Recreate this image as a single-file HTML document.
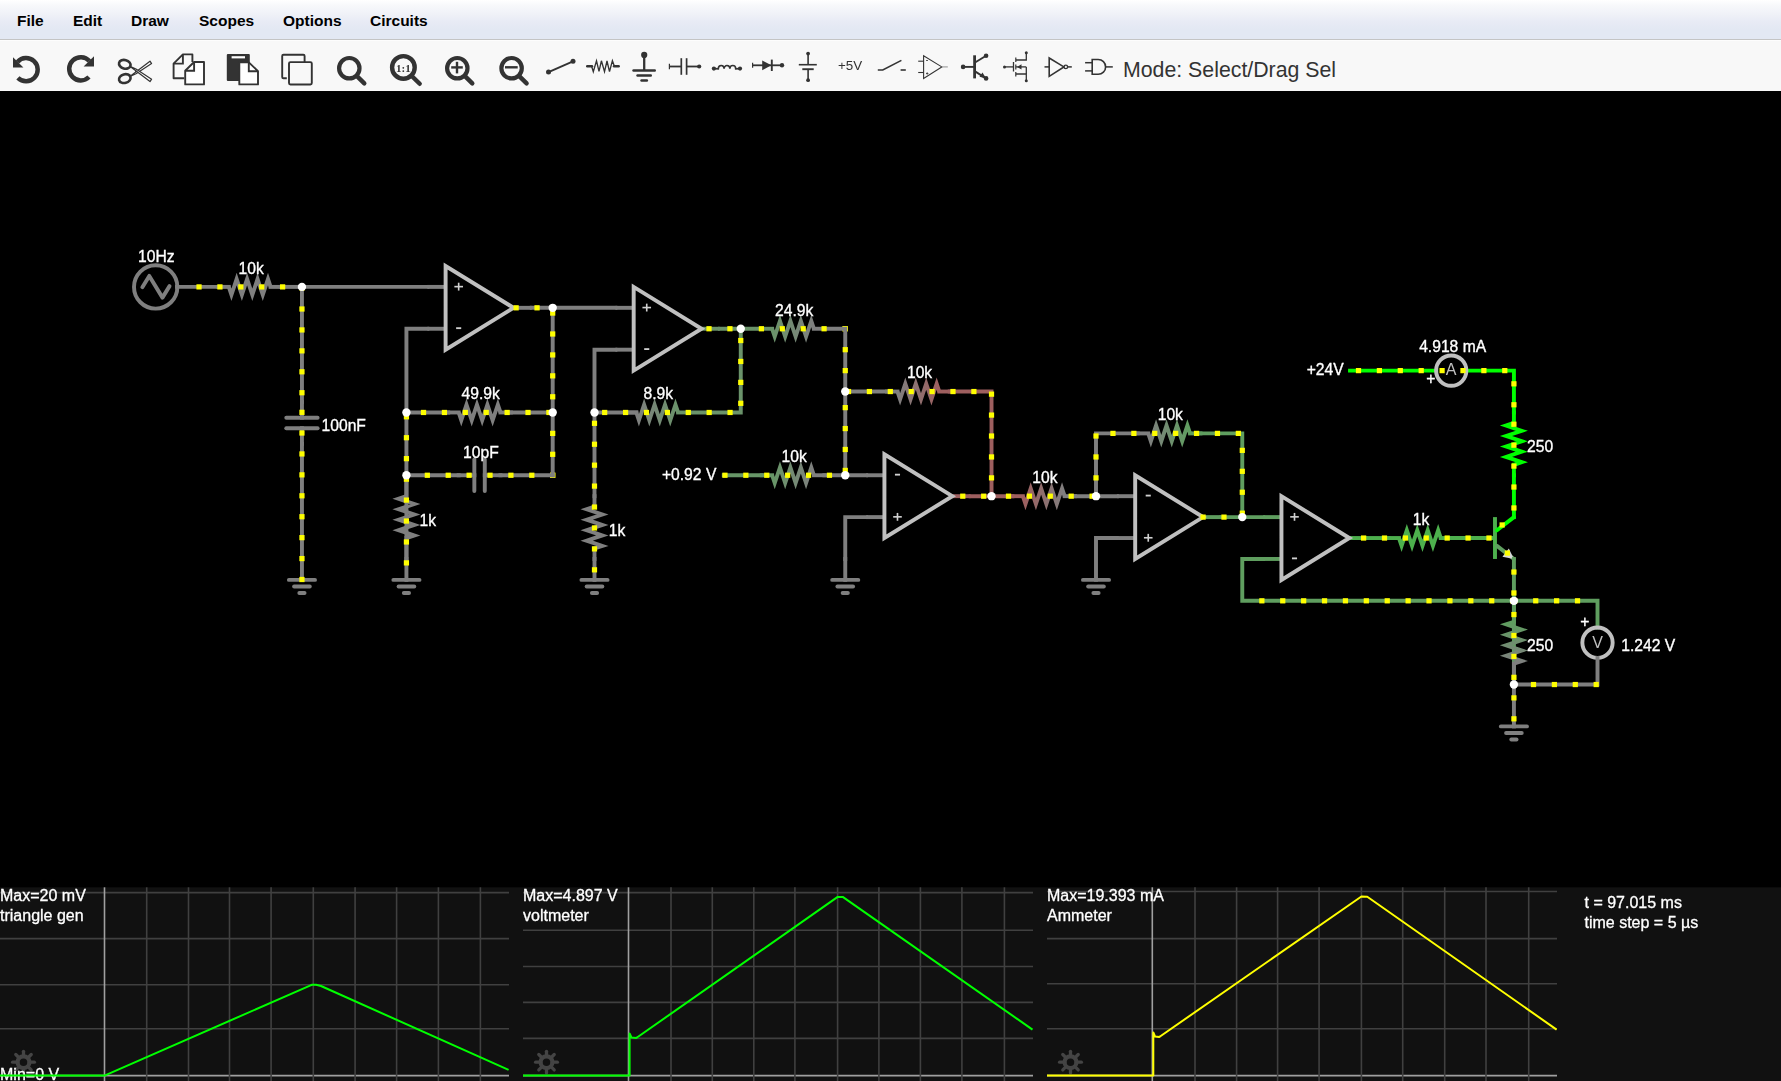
<!DOCTYPE html>
<html><head><meta charset="utf-8">
<style>
html,body{margin:0;padding:0;width:1781px;height:1081px;overflow:hidden;background:#000;font-family:"Liberation Sans",sans-serif;}
#menubar{position:absolute;left:0;top:0;width:1781px;height:39px;background:linear-gradient(#ffffff 0%,#f7f8fb 15%,#f0f2f8 35%,#e8ebf5 55%,#e3e8f3 75%,#e3e8f3 100%);border-bottom:1px solid #c4c4c4;}
#menubar span{position:absolute;top:11.7px;font-weight:bold;font-size:15.5px;color:#000;line-height:18px;}
#toolbar{position:absolute;left:0;top:40px;width:1781px;height:51.2px;background:#f8f8f8;border-top:1px solid #fdfdfd;box-sizing:border-box;}
#mode{position:absolute;left:1123px;top:57.5px;font-size:21.3px;line-height:24px;color:#333;}
svg{position:absolute;left:0;top:0;will-change:transform;}
</style></head><body>
<div id="menubar">
<span style="left:17px">File</span>
<span style="left:73px">Edit</span>
<span style="left:131px">Draw</span>
<span style="left:199px">Scopes</span>
<span style="left:283px">Options</span>
<span style="left:370px">Circuits</span>
</div>
<div id="toolbar"></div>
<div id="mode">Mode: Select/Drag Sel</div>
<svg width="1781" height="1081" viewBox="0 0 1781 1081" font-family="Liberation Sans, sans-serif">
<g fill="none" stroke="#333" stroke-linecap="butt">
<!-- undo -->
<path d="M 17.5,61.9 A 11.6 11.6 0 1 1 17.9,77.9" stroke-width="4.5"/>
<polygon points="13,57.2 13,67.6 23.4,67.6" fill="#333" stroke="none"/>
<!-- redo -->
<path d="M 89.4,61 A 11.6 11.6 0 1 0 89,77" stroke-width="4.5"/>
<polygon points="94,56.2 94,66.6 83.6,66.6" fill="#333" stroke="none"/>
<!-- scissors -->
<ellipse cx="124.8" cy="64.3" rx="5.9" ry="4.3" transform="rotate(15 124.8 64.3)" stroke-width="2.6"/>
<ellipse cx="124.8" cy="78.6" rx="5.9" ry="4.3" transform="rotate(-15 124.8 78.6)" stroke-width="2.6"/>
<path d="M129.5,76.8 L150,61.2 L151.6,63.6 L136,73.8 Z" fill="#fff" stroke-width="1.2" stroke-linejoin="round"/>
<path d="M129.5,66 L150,81.6 L151.6,79.2 L136,69 Z" fill="#fff" stroke-width="1.2" stroke-linejoin="round"/>
<circle cx="135.8" cy="71.2" r="0.8" fill="#333" stroke="none"/>
<!-- copy -->
<path d="M184.2,78.2 H173.6 V63.6 L182.9,54.4 H192.4 V62" stroke-width="1.9" stroke-linejoin="round"/>
<path d="M173.6,63.6 H182.9 V54.4" stroke-width="1.9"/>
<path d="M185.2,70.7 L194.1,62 H204 V84.4 H185.2 Z" fill="#fff" stroke-width="1.9" stroke-linejoin="round"/>
<path d="M185.2,70.7 H194.1 V62" stroke-width="1.9"/>
<!-- paste -->
<rect x="226.8" y="53.9" width="23" height="27" rx="1" fill="#333" stroke="none"/>
<rect x="231.6" y="56.2" width="13.4" height="2.2" fill="#fff" stroke="none"/>
<path d="M239.3,62.4 H248.8 L258,71.2 V84.4 H239.3 Z" fill="#fff" stroke-width="1.9" stroke-linejoin="round"/>
<path d="M248.8,62.4 V71.2 H258" stroke-width="1.9"/>
<!-- duplicate -->
<path d="M286.8,78.2 H283.5 Q282.2,78.2 282.2,76.9 V56.1 Q282.2,54.8 283.5,54.8 H303.3 Q304.6,54.8 304.6,56.1 V62" stroke-width="1.9"/>
<rect x="289" y="62.1" width="22.8" height="22.4" rx="1.4" stroke-width="1.9"/>
<!-- zoom -->
<circle cx="349.3" cy="68.2" r="10.2" stroke-width="4.2"/>
<line x1="357.2" y1="76.4" x2="364.3" y2="83.4" stroke-width="4.4" stroke-linecap="round"/>
<!-- zoom 1:1 -->
<circle cx="403.4" cy="67.4" r="11.3" stroke-width="4.4"/>
<line x1="412" y1="76.2" x2="419.7" y2="83.8" stroke-width="4.4" stroke-linecap="round"/>
<text x="403.4" y="71.8" font-family="Liberation Serif, serif" font-weight="bold" font-size="11" fill="#333" stroke="none" text-anchor="middle">1:1</text>
<!-- zoom in -->
<circle cx="457.3" cy="68.2" r="10.2" stroke-width="4.2"/>
<line x1="465.2" y1="76.4" x2="472.3" y2="83.4" stroke-width="4.4" stroke-linecap="round"/>
<line x1="451.2" y1="67.4" x2="462.8" y2="67.4" stroke-width="2.4"/>
<line x1="457" y1="61.8" x2="457" y2="73.4" stroke-width="2.4"/>
<!-- zoom out -->
<circle cx="511.6" cy="68.2" r="10.2" stroke-width="4.2"/>
<line x1="519.5" y1="76.4" x2="526.6" y2="83.4" stroke-width="4.4" stroke-linecap="round"/>
<line x1="505" y1="67.3" x2="517.7" y2="67.3" stroke-width="2.4"/>
<!-- wire -->
<line x1="548.5" y1="72.1" x2="573" y2="61.3" stroke-width="1.9"/>
<circle cx="548.5" cy="72.1" r="2.5" fill="#333" stroke="none"/>
<circle cx="573" cy="61.3" r="2.5" fill="#333" stroke="none"/>
<!-- resistor -->
<polyline points="591.6,66.2 593.3,71.6 596.5,60.8 599,71.4 601.4,60.8 604.5,71.6 607,61 609.5,71.6 612.4,60.8 614.4,66.2" stroke-width="1.35" stroke-linejoin="miter"/>
<line x1="587.2" y1="66.2" x2="592" y2="66.2" stroke-width="2.4" stroke-linecap="round"/>
<line x1="614" y1="66.2" x2="618.7" y2="66.2" stroke-width="2.4" stroke-linecap="round"/>
<!-- ground -->
<line x1="644.2" y1="55" x2="644.2" y2="70" stroke-width="2.3"/>
<circle cx="644.2" cy="54.9" r="3.1" fill="#333" stroke="none"/>
<line x1="633.6" y1="70.5" x2="654.7" y2="70.5" stroke-width="2.6" stroke-linecap="round"/>
<line x1="637.5" y1="75.5" x2="650.8" y2="75.5" stroke-width="2.4" stroke-linecap="round"/>
<line x1="641.5" y1="80.5" x2="646.9" y2="80.5" stroke-width="2.4" stroke-linecap="round"/>
<!-- capacitor -->
<line x1="669.3" y1="66.5" x2="681" y2="66.5" stroke-width="1.8"/>
<line x1="669.4" y1="63.8" x2="669.4" y2="69.2" stroke-width="1.2"/>
<line x1="681.3" y1="58.2" x2="681.3" y2="74.8" stroke-width="1.7"/>
<line x1="686.6" y1="58.2" x2="686.6" y2="74.8" stroke-width="1.7"/>
<line x1="686.6" y1="66.5" x2="699.2" y2="66.5" stroke-width="1.8"/>
<circle cx="699.2" cy="66.5" r="2.1" fill="#333" stroke="none"/>
<!-- inductor -->
<path d="M713.9,68.6 L718.3,68.8 A2.9,3.3 0 0 1 724.1,68.8 A2.9,3.3 0 0 1 729.9,68.8 A2.9,3.3 0 0 1 735.7,68.8 L740,68.6" stroke-width="1.6"/>
<circle cx="713.9" cy="68.6" r="2.1" fill="#333" stroke="none"/>
<circle cx="740" cy="68.6" r="2.1" fill="#333" stroke="none"/>
<!-- diode -->
<line x1="752.6" y1="65.3" x2="782" y2="65.3" stroke-width="1.8"/>
<line x1="752.6" y1="62.8" x2="752.6" y2="67.8" stroke-width="1.2"/>
<polygon points="762.2,60.4 762.2,70.2 771.4,65.3" fill="#333" stroke="none"/>
<line x1="771.8" y1="59.6" x2="771.8" y2="71" stroke-width="1.9"/>
<circle cx="782" cy="65.3" r="2.2" fill="#333" stroke="none"/>
<!-- battery -->
<line x1="808.1" y1="53.6" x2="808.1" y2="64.7" stroke-width="1.6"/>
<line x1="798.8" y1="64.7" x2="816.8" y2="64.7" stroke-width="1.6"/>
<line x1="802.3" y1="69.2" x2="813.7" y2="69.2" stroke-width="1.9"/>
<line x1="808.1" y1="69.2" x2="808.1" y2="80.2" stroke-width="1.6"/>
<circle cx="808.1" cy="53.6" r="1.9" fill="#333" stroke="none"/>
<circle cx="808.1" cy="80.2" r="1.9" fill="#333" stroke="none"/>
<!-- +5V -->
<text x="838" y="70" font-size="13.4" fill="#333" stroke="none">+5V</text>
<!-- switch -->
<polyline points="877.8,70 882.8,70 901.4,60.4" stroke-width="1.6"/>
<line x1="900.6" y1="70" x2="905.8" y2="70" stroke-width="1.6"/>
<!-- opamp -->
<polygon points="923.6,55.7 923.6,78.4 941.8,66.9" stroke-width="1.1"/>
<line x1="918.2" y1="61.2" x2="923.6" y2="61.2" stroke-width="1.1"/>
<line x1="918.2" y1="72.5" x2="923.6" y2="72.5" stroke-width="1.1"/>
<line x1="941.8" y1="66.9" x2="947.8" y2="66.9" stroke="#999" stroke-width="1.1"/>
<line x1="926" y1="60.5" x2="928" y2="60.5" stroke-width="0.8"/>
<line x1="926" y1="73.5" x2="928.4" y2="73.5" stroke-width="0.8"/>
<line x1="927.2" y1="72.3" x2="927.2" y2="74.7" stroke-width="0.8"/>
<!-- transistor -->
<line x1="974.6" y1="55.3" x2="974.6" y2="78.4" stroke-width="2.8"/>
<line x1="963.1" y1="66.9" x2="974.6" y2="66.9" stroke-width="1.9"/>
<circle cx="963.1" cy="66.9" r="2.3" fill="#333" stroke="none"/>
<line x1="974.6" y1="62.7" x2="986.1" y2="55.7" stroke-width="1.9"/>
<circle cx="986.1" cy="55.7" r="2.3" fill="#333" stroke="none"/>
<line x1="974.6" y1="71.1" x2="986.1" y2="78.4" stroke-width="1.9"/>
<circle cx="986.1" cy="78.4" r="2.3" fill="#333" stroke="none"/>
<polygon points="986.1,78.4 979.5,76.7 982.5,72.4" fill="#333" stroke="none"/>
<!-- mosfet -->
<line x1="1004" y1="66.9" x2="1013.3" y2="66.9" stroke-width="1.3"/>
<circle cx="1004.5" cy="66.9" r="1.5" fill="#333" stroke="none"/>
<line x1="1013.5" y1="62" x2="1013.5" y2="71.5" stroke-width="1.3"/>
<line x1="1015.8" y1="57.5" x2="1015.8" y2="62" stroke-width="1.2"/>
<line x1="1015.8" y1="64.5" x2="1015.8" y2="69.5" stroke-width="1.2"/>
<line x1="1015.8" y1="72" x2="1015.8" y2="76.5" stroke-width="1.2"/>
<polyline points="1016,60 1026.3,60 1026.3,52.8" stroke-width="1.3"/>
<polyline points="1016,74 1026.3,74 1026.3,80.8" stroke-width="1.3"/>
<line x1="1016" y1="66.9" x2="1026.3" y2="66.9" stroke-width="1.3"/>
<line x1="1026.3" y1="66.9" x2="1026.3" y2="74" stroke-width="1.3"/>
<polygon points="1017,66.9 1021.5,64.3 1021.5,69.5" fill="#333" stroke="none"/>
<circle cx="1026.3" cy="52.8" r="1.5" fill="#333" stroke="none"/>
<circle cx="1026.3" cy="80.8" r="1.5" fill="#333" stroke="none"/>
<!-- inverter -->
<polygon points="1049.2,58 1049.2,76.3 1063.9,66.9" stroke-width="1.6"/>
<line x1="1044.5" y1="66.9" x2="1049.2" y2="66.9" stroke-width="1.5"/>
<circle cx="1065.8" cy="66.9" r="1.8" stroke-width="1.3"/>
<line x1="1067.6" y1="66.9" x2="1071.8" y2="66.9" stroke-width="1.5"/>
<!-- AND -->
<line x1="1085.1" y1="62.7" x2="1092.2" y2="62.7" stroke-width="1.5"/>
<line x1="1085.1" y1="70.9" x2="1092.2" y2="70.9" stroke-width="1.5"/>
<path d="M1092.2,59.5 H1098.2 A 7.4 7.4 0 0 1 1098.2,74.3 H1092.2 Z" stroke-width="1.6"/>
<line x1="1105.6" y1="66.9" x2="1112.8" y2="66.9" stroke-width="1.5"/>
</g>

<rect x="0" y="887.3" width="1781" height="194" fill="#111111"/>
<line x1="0" y1="892.6" x2="509" y2="892.6" stroke="#404040" stroke-width="1.6"/>
<line x1="0" y1="938.6" x2="509" y2="938.6" stroke="#404040" stroke-width="1.6"/>
<line x1="0" y1="984.7" x2="509" y2="984.7" stroke="#404040" stroke-width="1.6"/>
<line x1="0" y1="1028.8" x2="509" y2="1028.8" stroke="#404040" stroke-width="1.6"/>
<line x1="0" y1="1075.6" x2="509" y2="1075.6" stroke="#a0a0a0" stroke-width="1.6"/>
<line x1="104.5" y1="887.3" x2="104.5" y2="1081" stroke="#a0a0a0" stroke-width="1.6"/>
<line x1="146.7" y1="887.3" x2="146.7" y2="1081" stroke="#404040" stroke-width="1.6"/>
<line x1="188.5" y1="887.3" x2="188.5" y2="1081" stroke="#404040" stroke-width="1.6"/>
<line x1="229.5" y1="887.3" x2="229.5" y2="1081" stroke="#404040" stroke-width="1.6"/>
<line x1="271.1" y1="887.3" x2="271.1" y2="1081" stroke="#404040" stroke-width="1.6"/>
<line x1="313.3" y1="887.3" x2="313.3" y2="1081" stroke="#404040" stroke-width="1.6"/>
<line x1="355.1" y1="887.3" x2="355.1" y2="1081" stroke="#404040" stroke-width="1.6"/>
<line x1="396.6" y1="887.3" x2="396.6" y2="1081" stroke="#404040" stroke-width="1.6"/>
<line x1="438.4" y1="887.3" x2="438.4" y2="1081" stroke="#404040" stroke-width="1.6"/>
<line x1="480.4" y1="887.3" x2="480.4" y2="1081" stroke="#404040" stroke-width="1.6"/>
<circle cx="23.5" cy="1062.2" r="5.9" fill="none" stroke="#444" stroke-width="4.2"/><line x1="29.50" y1="1062.20" x2="34.40" y2="1062.20" stroke="#444" stroke-width="3.3" stroke-linecap="round"/><line x1="27.74" y1="1066.44" x2="31.21" y2="1069.91" stroke="#444" stroke-width="3.3" stroke-linecap="round"/><line x1="23.50" y1="1068.20" x2="23.50" y2="1073.10" stroke="#444" stroke-width="3.3" stroke-linecap="round"/><line x1="19.26" y1="1066.44" x2="15.79" y2="1069.91" stroke="#444" stroke-width="3.3" stroke-linecap="round"/><line x1="17.50" y1="1062.20" x2="12.60" y2="1062.20" stroke="#444" stroke-width="3.3" stroke-linecap="round"/><line x1="19.26" y1="1057.96" x2="15.79" y2="1054.49" stroke="#444" stroke-width="3.3" stroke-linecap="round"/><line x1="23.50" y1="1056.20" x2="23.50" y2="1051.30" stroke="#444" stroke-width="3.3" stroke-linecap="round"/><line x1="27.74" y1="1057.96" x2="31.21" y2="1054.49" stroke="#444" stroke-width="3.3" stroke-linecap="round"/>
<text x="0" y="900.8" font-size="16" fill="#fff" stroke="#fff" stroke-width="0.3">Max=20 mV</text>
<text x="0" y="920.8" font-size="16" fill="#fff" stroke="#fff" stroke-width="0.3">triangle gen</text>
<text x="0" y="1080" font-size="16" fill="#fff" stroke="#fff" stroke-width="0.3">Min=0 V</text>
<polyline points="0,1075.6 104.5,1075.6 310,985.6 312,984.8 316,984.8 321,986 508.6,1069.9" fill="none" stroke="#00ff00" stroke-width="2" stroke-linejoin="round"/>
<line x1="523" y1="892.6" x2="1033" y2="892.6" stroke="#404040" stroke-width="1.6"/>
<line x1="523" y1="930.2" x2="1033" y2="930.2" stroke="#404040" stroke-width="1.6"/>
<line x1="523" y1="966.5" x2="1033" y2="966.5" stroke="#404040" stroke-width="1.6"/>
<line x1="523" y1="1002.4" x2="1033" y2="1002.4" stroke="#404040" stroke-width="1.6"/>
<line x1="523" y1="1038.4" x2="1033" y2="1038.4" stroke="#404040" stroke-width="1.6"/>
<line x1="523" y1="1075.6" x2="1033" y2="1075.6" stroke="#a0a0a0" stroke-width="1.6"/>
<line x1="628.5" y1="887.3" x2="628.5" y2="1081" stroke="#a0a0a0" stroke-width="1.6"/>
<line x1="671.0" y1="887.3" x2="671.0" y2="1081" stroke="#404040" stroke-width="1.6"/>
<line x1="712.3" y1="887.3" x2="712.3" y2="1081" stroke="#404040" stroke-width="1.6"/>
<line x1="753.8" y1="887.3" x2="753.8" y2="1081" stroke="#404040" stroke-width="1.6"/>
<line x1="794.9" y1="887.3" x2="794.9" y2="1081" stroke="#404040" stroke-width="1.6"/>
<line x1="837.6" y1="887.3" x2="837.6" y2="1081" stroke="#404040" stroke-width="1.6"/>
<line x1="878.9" y1="887.3" x2="878.9" y2="1081" stroke="#404040" stroke-width="1.6"/>
<line x1="920.4" y1="887.3" x2="920.4" y2="1081" stroke="#404040" stroke-width="1.6"/>
<line x1="961.9" y1="887.3" x2="961.9" y2="1081" stroke="#404040" stroke-width="1.6"/>
<line x1="1004.4" y1="887.3" x2="1004.4" y2="1081" stroke="#404040" stroke-width="1.6"/>
<circle cx="546.5" cy="1062.2" r="5.9" fill="none" stroke="#444" stroke-width="4.2"/><line x1="552.50" y1="1062.20" x2="557.40" y2="1062.20" stroke="#444" stroke-width="3.3" stroke-linecap="round"/><line x1="550.74" y1="1066.44" x2="554.21" y2="1069.91" stroke="#444" stroke-width="3.3" stroke-linecap="round"/><line x1="546.50" y1="1068.20" x2="546.50" y2="1073.10" stroke="#444" stroke-width="3.3" stroke-linecap="round"/><line x1="542.26" y1="1066.44" x2="538.79" y2="1069.91" stroke="#444" stroke-width="3.3" stroke-linecap="round"/><line x1="540.50" y1="1062.20" x2="535.60" y2="1062.20" stroke="#444" stroke-width="3.3" stroke-linecap="round"/><line x1="542.26" y1="1057.96" x2="538.79" y2="1054.49" stroke="#444" stroke-width="3.3" stroke-linecap="round"/><line x1="546.50" y1="1056.20" x2="546.50" y2="1051.30" stroke="#444" stroke-width="3.3" stroke-linecap="round"/><line x1="550.74" y1="1057.96" x2="554.21" y2="1054.49" stroke="#444" stroke-width="3.3" stroke-linecap="round"/>
<text x="523" y="900.8" font-size="16" fill="#fff" stroke="#fff" stroke-width="0.3">Max=4.897 V</text>
<text x="523" y="920.8" font-size="16" fill="#fff" stroke="#fff" stroke-width="0.3">voltmeter</text>
<polyline points="523,1075.6 629.6,1075.6 629.6,1033.5 631.5,1037.5 636,1038 637,1037.5 837.7,896.9 842.7,896.9 1032.5,1029.6" fill="none" stroke="#00ff00" stroke-width="2" stroke-linejoin="round"/>
<line x1="1047" y1="891.5" x2="1557" y2="891.5" stroke="#404040" stroke-width="1.6"/>
<line x1="1047" y1="938.6" x2="1557" y2="938.6" stroke="#404040" stroke-width="1.6"/>
<line x1="1047" y1="983.8" x2="1557" y2="983.8" stroke="#404040" stroke-width="1.6"/>
<line x1="1047" y1="1028.8" x2="1557" y2="1028.8" stroke="#404040" stroke-width="1.6"/>
<line x1="1047" y1="1075.6" x2="1557" y2="1075.6" stroke="#a0a0a0" stroke-width="1.6"/>
<line x1="1152.3" y1="887.3" x2="1152.3" y2="1081" stroke="#a0a0a0" stroke-width="1.6"/>
<line x1="1195.0" y1="887.3" x2="1195.0" y2="1081" stroke="#404040" stroke-width="1.6"/>
<line x1="1236.6" y1="887.3" x2="1236.6" y2="1081" stroke="#404040" stroke-width="1.6"/>
<line x1="1277.6" y1="887.3" x2="1277.6" y2="1081" stroke="#404040" stroke-width="1.6"/>
<line x1="1319.1" y1="887.3" x2="1319.1" y2="1081" stroke="#404040" stroke-width="1.6"/>
<line x1="1361.4" y1="887.3" x2="1361.4" y2="1081" stroke="#404040" stroke-width="1.6"/>
<line x1="1402.7" y1="887.3" x2="1402.7" y2="1081" stroke="#404040" stroke-width="1.6"/>
<line x1="1444.7" y1="887.3" x2="1444.7" y2="1081" stroke="#404040" stroke-width="1.6"/>
<line x1="1486.0" y1="887.3" x2="1486.0" y2="1081" stroke="#404040" stroke-width="1.6"/>
<line x1="1528.7" y1="887.3" x2="1528.7" y2="1081" stroke="#404040" stroke-width="1.6"/>
<circle cx="1070.5" cy="1062.2" r="5.9" fill="none" stroke="#444" stroke-width="4.2"/><line x1="1076.50" y1="1062.20" x2="1081.40" y2="1062.20" stroke="#444" stroke-width="3.3" stroke-linecap="round"/><line x1="1074.74" y1="1066.44" x2="1078.21" y2="1069.91" stroke="#444" stroke-width="3.3" stroke-linecap="round"/><line x1="1070.50" y1="1068.20" x2="1070.50" y2="1073.10" stroke="#444" stroke-width="3.3" stroke-linecap="round"/><line x1="1066.26" y1="1066.44" x2="1062.79" y2="1069.91" stroke="#444" stroke-width="3.3" stroke-linecap="round"/><line x1="1064.50" y1="1062.20" x2="1059.60" y2="1062.20" stroke="#444" stroke-width="3.3" stroke-linecap="round"/><line x1="1066.26" y1="1057.96" x2="1062.79" y2="1054.49" stroke="#444" stroke-width="3.3" stroke-linecap="round"/><line x1="1070.50" y1="1056.20" x2="1070.50" y2="1051.30" stroke="#444" stroke-width="3.3" stroke-linecap="round"/><line x1="1074.74" y1="1057.96" x2="1078.21" y2="1054.49" stroke="#444" stroke-width="3.3" stroke-linecap="round"/>
<text x="1047" y="900.8" font-size="16" fill="#fff" stroke="#fff" stroke-width="0.3">Max=19.393 mA</text>
<text x="1047" y="920.8" font-size="16" fill="#fff" stroke="#fff" stroke-width="0.3">Ammeter</text>
<polyline points="1047,1075.6 1153.3,1075.6 1153.3,1032.4 1155,1036.5 1159,1037 1160,1036.5 1361.4,896.5 1367.3,896.8 1556.6,1029.6" fill="none" stroke="#ffff00" stroke-width="2" stroke-linejoin="round"/>
<text x="1584.5" y="907.8" font-size="16" fill="#fff" stroke="#fff" stroke-width="0.3">t = 97.015 ms</text>
<text x="1584.5" y="927.8" font-size="16" fill="#fff" stroke="#fff" stroke-width="0.3">time step = 5 µs</text>
<g transform="translate(301.95,286.9) scale(1.306,1.308)">
<rect x="190.00" y="142.00" width="4" height="4" fill="#ffff00"/>
<rect x="190.00" y="142.00" width="4" height="4" fill="#ffff00"/>
<rect x="413.80" y="30.00" width="4" height="4" fill="#ffff00"/>
<rect x="414.00" y="30.00" width="4" height="4" fill="#ffff00"/>
<circle cx="-112" cy="0" r="16.6" fill="none" stroke="#7f7f7f" stroke-width="3"/>
<polyline points="-122.2,0.2 -116.9,-8.4 -106.8,8.2 -101.4,-0.6" fill="none" stroke="#7f7f7f" stroke-width="3" stroke-linejoin="round" stroke-linecap="round"/>
<path d="M-95.7,0 L-64,0" fill="none" stroke="#7f7f7f" stroke-width="3" stroke-linecap="square" stroke-linejoin="miter"/>
<line x1="-64" y1="0" x2="-56" y2="0" stroke="#7f7f7f" stroke-width="3" stroke-linecap="square"/>
<line x1="-24" y1="0" x2="-16" y2="0" stroke="#7f7f7f" stroke-width="3" stroke-linecap="square"/>
<linearGradient id="rg1" gradientUnits="userSpaceOnUse" x1="-56" y1="0" x2="-24" y2="0"><stop offset="0" stop-color="#7f7f7f"/><stop offset="1" stop-color="#7f7f7f"/></linearGradient>
<path d="M-56.00,0.00 L-54.00,6.00 L-50.00,-6.00 L-46.00,6.00 L-42.00,-6.00 L-38.00,6.00 L-34.00,-6.00 L-30.00,6.00 L-26.00,-6.00 L-24.00,0.00" fill="none" stroke="url(#rg1)" stroke-width="3" stroke-linejoin="miter" stroke-miterlimit="10"/>
<path d="M-16,0 L0,0" fill="none" stroke="#7f7f7f" stroke-width="3" stroke-linecap="square" stroke-linejoin="miter"/>
<path d="M0,0 L0,88" fill="none" stroke="#7f7f7f" stroke-width="3" stroke-linecap="square" stroke-linejoin="miter"/>
<line x1="0" y1="88" x2="0" y2="100" stroke="#7f7f7f" stroke-width="3" stroke-linecap="square"/>
<line x1="0" y1="108" x2="0" y2="120" stroke="#7f7f7f" stroke-width="3" stroke-linecap="square"/>
<line x1="12" y1="100" x2="-12" y2="100" stroke="#7f7f7f" stroke-width="3" stroke-linecap="round"/>
<line x1="12" y1="108" x2="-12" y2="108" stroke="#7f7f7f" stroke-width="3" stroke-linecap="round"/>
<path d="M0,120 L0,224" fill="none" stroke="#7f7f7f" stroke-width="3" stroke-linecap="square" stroke-linejoin="miter"/>
<line x1="-10" y1="224" x2="10" y2="224" stroke="#7f7f7f" stroke-width="3" stroke-linecap="round"/>
<line x1="-6" y1="229" x2="6" y2="229" stroke="#7f7f7f" stroke-width="3" stroke-linecap="round"/>
<line x1="-2" y1="234" x2="2" y2="234" stroke="#7f7f7f" stroke-width="3" stroke-linecap="round"/>
<path d="M0,0 L96,0" fill="none" stroke="#7f7f7f" stroke-width="3" stroke-linecap="square" stroke-linejoin="miter"/>
<line x1="96" y1="0" x2="110" y2="0" stroke="#7f7f7f" stroke-width="3" stroke-linecap="butt"/>
<line x1="96" y1="32" x2="110" y2="32" stroke="#7f7f7f" stroke-width="3" stroke-linecap="butt"/>
<line x1="162" y1="16" x2="176" y2="16" stroke="#7f7f7f" stroke-width="3" stroke-linecap="butt"/>
<polygon points="110,-16 110,48 162,16" fill="none" stroke="#c0c0c0" stroke-width="3" stroke-linejoin="miter"/>
<path d="M176,16 L240,16" fill="none" stroke="#7f7f7f" stroke-width="3" stroke-linecap="square" stroke-linejoin="miter"/>
<path d="M96,32 L80,32 L80,208" fill="none" stroke="#7f7f7f" stroke-width="3" stroke-linecap="square" stroke-linejoin="miter"/>
<path d="M80,96 L112,96" fill="none" stroke="#7f7f7f" stroke-width="3" stroke-linecap="square" stroke-linejoin="miter"/>
<line x1="112" y1="96" x2="120" y2="96" stroke="#7f7f7f" stroke-width="3" stroke-linecap="square"/>
<line x1="152" y1="96" x2="160" y2="96" stroke="#7f7f7f" stroke-width="3" stroke-linecap="square"/>
<linearGradient id="rg2" gradientUnits="userSpaceOnUse" x1="120" y1="96" x2="152" y2="96"><stop offset="0" stop-color="#7f7f7f"/><stop offset="1" stop-color="#7f7f7f"/></linearGradient>
<path d="M120.00,96.00 L122.00,102.00 L126.00,90.00 L130.00,102.00 L134.00,90.00 L138.00,102.00 L142.00,90.00 L146.00,102.00 L150.00,90.00 L152.00,96.00" fill="none" stroke="url(#rg2)" stroke-width="3" stroke-linejoin="miter" stroke-miterlimit="10"/>
<path d="M160,96 L192,96" fill="none" stroke="#7f7f7f" stroke-width="3" stroke-linecap="square" stroke-linejoin="miter"/>
<path d="M80,144 L120,144" fill="none" stroke="#7f7f7f" stroke-width="3" stroke-linecap="square" stroke-linejoin="miter"/>
<line x1="120" y1="144" x2="132" y2="144" stroke="#7f7f7f" stroke-width="3" stroke-linecap="square"/>
<line x1="140" y1="144" x2="152" y2="144" stroke="#7f7f7f" stroke-width="3" stroke-linecap="square"/>
<line x1="132" y1="132" x2="132" y2="156" stroke="#7f7f7f" stroke-width="3" stroke-linecap="round"/>
<line x1="140" y1="132" x2="140" y2="156" stroke="#7f7f7f" stroke-width="3" stroke-linecap="round"/>
<path d="M152,144 L192,144" fill="none" stroke="#7f7f7f" stroke-width="3" stroke-linecap="square" stroke-linejoin="miter"/>
<path d="M192,16 L192,144" fill="none" stroke="#7f7f7f" stroke-width="3" stroke-linecap="square" stroke-linejoin="miter"/>
<line x1="80" y1="144" x2="80" y2="160" stroke="#7f7f7f" stroke-width="3" stroke-linecap="square"/>
<line x1="80" y1="192" x2="80" y2="208" stroke="#7f7f7f" stroke-width="3" stroke-linecap="square"/>
<linearGradient id="rg3" gradientUnits="userSpaceOnUse" x1="80" y1="160" x2="80" y2="192"><stop offset="0" stop-color="#7f7f7f"/><stop offset="1" stop-color="#7f7f7f"/></linearGradient>
<path d="M80.00,160.00 L74.00,162.00 L86.00,166.00 L74.00,170.00 L86.00,174.00 L74.00,178.00 L86.00,182.00 L74.00,186.00 L86.00,190.00 L80.00,192.00" fill="none" stroke="url(#rg3)" stroke-width="3" stroke-linejoin="miter" stroke-miterlimit="10"/>
<path d="M80,208 L80,224" fill="none" stroke="#7f7f7f" stroke-width="3" stroke-linecap="square" stroke-linejoin="miter"/>
<line x1="70" y1="224" x2="90" y2="224" stroke="#7f7f7f" stroke-width="3" stroke-linecap="round"/>
<line x1="74" y1="229" x2="86" y2="229" stroke="#7f7f7f" stroke-width="3" stroke-linecap="round"/>
<line x1="78" y1="234" x2="82" y2="234" stroke="#7f7f7f" stroke-width="3" stroke-linecap="round"/>
<line x1="240" y1="16" x2="254" y2="16" stroke="#7f7f7f" stroke-width="3" stroke-linecap="butt"/>
<line x1="240" y1="48" x2="254" y2="48" stroke="#7f7f7f" stroke-width="3" stroke-linecap="butt"/>
<line x1="306" y1="32" x2="320" y2="32" stroke="#6a936a" stroke-width="3" stroke-linecap="butt"/>
<polygon points="254,0 254,64 306,32" fill="none" stroke="#c0c0c0" stroke-width="3" stroke-linejoin="miter"/>
<path d="M240,48 L224,48 L224,96" fill="none" stroke="#7f7f7f" stroke-width="3" stroke-linecap="square" stroke-linejoin="miter"/>
<path d="M224,96 L256,96" fill="none" stroke="#7f7f7f" stroke-width="3" stroke-linecap="square" stroke-linejoin="miter"/>
<line x1="248" y1="96" x2="256" y2="96" stroke="#7f7f7f" stroke-width="3" stroke-linecap="square"/>
<line x1="288" y1="96" x2="296" y2="96" stroke="#6a936a" stroke-width="3" stroke-linecap="square"/>
<linearGradient id="rg4" gradientUnits="userSpaceOnUse" x1="256" y1="96" x2="288" y2="96"><stop offset="0" stop-color="#7f7f7f"/><stop offset="1" stop-color="#6a936a"/></linearGradient>
<path d="M256.00,96.00 L258.00,102.00 L262.00,90.00 L266.00,102.00 L270.00,90.00 L274.00,102.00 L278.00,90.00 L282.00,102.00 L286.00,90.00 L288.00,96.00" fill="none" stroke="url(#rg4)" stroke-width="3" stroke-linejoin="miter" stroke-miterlimit="10"/>
<path d="M296,96 L336,96 L336,32" fill="none" stroke="#6a936a" stroke-width="3" stroke-linecap="square" stroke-linejoin="miter"/>
<path d="M224,96 L224,160" fill="none" stroke="#7f7f7f" stroke-width="3" stroke-linecap="square" stroke-linejoin="miter"/>
<line x1="224" y1="160" x2="224" y2="168" stroke="#7f7f7f" stroke-width="3" stroke-linecap="square"/>
<line x1="224" y1="200" x2="224" y2="208" stroke="#7f7f7f" stroke-width="3" stroke-linecap="square"/>
<linearGradient id="rg5" gradientUnits="userSpaceOnUse" x1="224" y1="168" x2="224" y2="200"><stop offset="0" stop-color="#7f7f7f"/><stop offset="1" stop-color="#7f7f7f"/></linearGradient>
<path d="M224.00,168.00 L218.00,170.00 L230.00,174.00 L218.00,178.00 L230.00,182.00 L218.00,186.00 L230.00,190.00 L218.00,194.00 L230.00,198.00 L224.00,200.00" fill="none" stroke="url(#rg5)" stroke-width="3" stroke-linejoin="miter" stroke-miterlimit="10"/>
<path d="M224,208 L224,224" fill="none" stroke="#7f7f7f" stroke-width="3" stroke-linecap="square" stroke-linejoin="miter"/>
<line x1="214" y1="224" x2="234" y2="224" stroke="#7f7f7f" stroke-width="3" stroke-linecap="round"/>
<line x1="218" y1="229" x2="230" y2="229" stroke="#7f7f7f" stroke-width="3" stroke-linecap="round"/>
<line x1="222" y1="234" x2="226" y2="234" stroke="#7f7f7f" stroke-width="3" stroke-linecap="round"/>
<path d="M320,32 L352,32" fill="none" stroke="#6a936a" stroke-width="3" stroke-linecap="square" stroke-linejoin="miter"/>
<line x1="352" y1="32" x2="360" y2="32" stroke="#6a936a" stroke-width="3" stroke-linecap="square"/>
<line x1="392" y1="32" x2="400" y2="32" stroke="#7f7f7f" stroke-width="3" stroke-linecap="square"/>
<linearGradient id="rg6" gradientUnits="userSpaceOnUse" x1="360" y1="32" x2="392" y2="32"><stop offset="0" stop-color="#6a936a"/><stop offset="1" stop-color="#7f7f7f"/></linearGradient>
<path d="M360.00,32.00 L362.00,38.00 L366.00,26.00 L370.00,38.00 L374.00,26.00 L378.00,38.00 L382.00,26.00 L386.00,38.00 L390.00,26.00 L392.00,32.00" fill="none" stroke="url(#rg6)" stroke-width="3" stroke-linejoin="miter" stroke-miterlimit="10"/>
<path d="M400,32 L416,32 L416,144" fill="none" stroke="#7f7f7f" stroke-width="3" stroke-linecap="square" stroke-linejoin="miter"/>
<path d="M323,144 L352,144" fill="none" stroke="#679667" stroke-width="3" stroke-linecap="square" stroke-linejoin="miter"/>
<line x1="352" y1="144" x2="360" y2="144" stroke="#679667" stroke-width="3" stroke-linecap="square"/>
<line x1="392" y1="144" x2="400" y2="144" stroke="#7f7f7f" stroke-width="3" stroke-linecap="square"/>
<linearGradient id="rg7" gradientUnits="userSpaceOnUse" x1="360" y1="144" x2="392" y2="144"><stop offset="0" stop-color="#679667"/><stop offset="1" stop-color="#7f7f7f"/></linearGradient>
<path d="M360.00,144.00 L362.00,150.00 L366.00,138.00 L370.00,150.00 L374.00,138.00 L378.00,150.00 L382.00,138.00 L386.00,150.00 L390.00,138.00 L392.00,144.00" fill="none" stroke="url(#rg7)" stroke-width="3" stroke-linejoin="miter" stroke-miterlimit="10"/>
<path d="M400,144 L432,144" fill="none" stroke="#7f7f7f" stroke-width="3" stroke-linecap="square" stroke-linejoin="miter"/>
<line x1="432" y1="144" x2="446" y2="144" stroke="#7f7f7f" stroke-width="3" stroke-linecap="butt"/>
<line x1="432" y1="176" x2="446" y2="176" stroke="#7f7f7f" stroke-width="3" stroke-linecap="butt"/>
<line x1="498" y1="160" x2="512" y2="160" stroke="#9e5f5f" stroke-width="3" stroke-linecap="butt"/>
<polygon points="446,128 446,192 498,160" fill="none" stroke="#c0c0c0" stroke-width="3" stroke-linejoin="miter"/>
<path d="M432,176 L416,176 L416,208" fill="none" stroke="#7f7f7f" stroke-width="3" stroke-linecap="square" stroke-linejoin="miter"/>
<path d="M416,208 L416,224" fill="none" stroke="#7f7f7f" stroke-width="3" stroke-linecap="square" stroke-linejoin="miter"/>
<line x1="406" y1="224" x2="426" y2="224" stroke="#7f7f7f" stroke-width="3" stroke-linecap="round"/>
<line x1="410" y1="229" x2="422" y2="229" stroke="#7f7f7f" stroke-width="3" stroke-linecap="round"/>
<line x1="414" y1="234" x2="418" y2="234" stroke="#7f7f7f" stroke-width="3" stroke-linecap="round"/>
<path d="M416,80 L448,80" fill="none" stroke="#7f7f7f" stroke-width="3" stroke-linecap="square" stroke-linejoin="miter"/>
<line x1="448" y1="80" x2="456" y2="80" stroke="#7f7f7f" stroke-width="3" stroke-linecap="square"/>
<line x1="488" y1="80" x2="496" y2="80" stroke="#9e5f5f" stroke-width="3" stroke-linecap="square"/>
<linearGradient id="rg8" gradientUnits="userSpaceOnUse" x1="456" y1="80" x2="488" y2="80"><stop offset="0" stop-color="#7f7f7f"/><stop offset="1" stop-color="#9e5f5f"/></linearGradient>
<path d="M456.00,80.00 L458.00,86.00 L462.00,74.00 L466.00,86.00 L470.00,74.00 L474.00,86.00 L478.00,74.00 L482.00,86.00 L486.00,74.00 L488.00,80.00" fill="none" stroke="url(#rg8)" stroke-width="3" stroke-linejoin="miter" stroke-miterlimit="10"/>
<path d="M496,80 L528,80 L528,160" fill="none" stroke="#9e5f5f" stroke-width="3" stroke-linecap="square" stroke-linejoin="miter"/>
<path d="M512,160 L544,160" fill="none" stroke="#9e5f5f" stroke-width="3" stroke-linecap="square" stroke-linejoin="miter"/>
<line x1="544" y1="160" x2="552" y2="160" stroke="#9e5f5f" stroke-width="3" stroke-linecap="square"/>
<line x1="584" y1="160" x2="592" y2="160" stroke="#7f7f7f" stroke-width="3" stroke-linecap="square"/>
<linearGradient id="rg9" gradientUnits="userSpaceOnUse" x1="552" y1="160" x2="584" y2="160"><stop offset="0" stop-color="#9e5f5f"/><stop offset="1" stop-color="#7f7f7f"/></linearGradient>
<path d="M552.00,160.00 L554.00,166.00 L558.00,154.00 L562.00,166.00 L566.00,154.00 L570.00,166.00 L574.00,154.00 L578.00,166.00 L582.00,154.00 L584.00,160.00" fill="none" stroke="url(#rg9)" stroke-width="3" stroke-linejoin="miter" stroke-miterlimit="10"/>
<path d="M592,160 L624,160" fill="none" stroke="#7f7f7f" stroke-width="3" stroke-linecap="square" stroke-linejoin="miter"/>
<line x1="624" y1="160" x2="638" y2="160" stroke="#7f7f7f" stroke-width="3" stroke-linecap="butt"/>
<line x1="624" y1="192" x2="638" y2="192" stroke="#7f7f7f" stroke-width="3" stroke-linecap="butt"/>
<line x1="690" y1="176" x2="704" y2="176" stroke="#5f9e5f" stroke-width="3" stroke-linecap="butt"/>
<polygon points="638,144 638,208 690,176" fill="none" stroke="#c0c0c0" stroke-width="3" stroke-linejoin="miter"/>
<path d="M624,192 L608,192 L608,224" fill="none" stroke="#7f7f7f" stroke-width="3" stroke-linecap="square" stroke-linejoin="miter"/>
<line x1="598" y1="224" x2="618" y2="224" stroke="#7f7f7f" stroke-width="3" stroke-linecap="round"/>
<line x1="602" y1="229" x2="614" y2="229" stroke="#7f7f7f" stroke-width="3" stroke-linecap="round"/>
<line x1="606" y1="234" x2="610" y2="234" stroke="#7f7f7f" stroke-width="3" stroke-linecap="round"/>
<path d="M608,160 L608,112 L640,112" fill="none" stroke="#7f7f7f" stroke-width="3" stroke-linecap="square" stroke-linejoin="miter"/>
<line x1="640" y1="112" x2="648" y2="112" stroke="#7f7f7f" stroke-width="3" stroke-linecap="square"/>
<line x1="680" y1="112" x2="688" y2="112" stroke="#5f9e5f" stroke-width="3" stroke-linecap="square"/>
<linearGradient id="rg10" gradientUnits="userSpaceOnUse" x1="648" y1="112" x2="680" y2="112"><stop offset="0" stop-color="#7f7f7f"/><stop offset="1" stop-color="#5f9e5f"/></linearGradient>
<path d="M648.00,112.00 L650.00,118.00 L654.00,106.00 L658.00,118.00 L662.00,106.00 L666.00,118.00 L670.00,106.00 L674.00,118.00 L678.00,106.00 L680.00,112.00" fill="none" stroke="url(#rg10)" stroke-width="3" stroke-linejoin="miter" stroke-miterlimit="10"/>
<path d="M688,112 L720,112 L720,176" fill="none" stroke="#5f9e5f" stroke-width="3" stroke-linecap="square" stroke-linejoin="miter"/>
<path d="M704,176 L736,176" fill="none" stroke="#5f9e5f" stroke-width="3" stroke-linecap="square" stroke-linejoin="miter"/>
<line x1="736" y1="176" x2="750" y2="176" stroke="#5f9e5f" stroke-width="3" stroke-linecap="butt"/>
<line x1="736" y1="208" x2="750" y2="208" stroke="#5f9e5f" stroke-width="3" stroke-linecap="butt"/>
<line x1="802" y1="192" x2="816" y2="192" stroke="#4db04d" stroke-width="3" stroke-linecap="butt"/>
<polygon points="750,160 750,224 802,192" fill="none" stroke="#c0c0c0" stroke-width="3" stroke-linejoin="miter"/>
<path d="M736,208 L720,208 L720,240 L928,240" fill="none" stroke="#5f9e5f" stroke-width="3" stroke-linecap="square" stroke-linejoin="miter"/>
<path d="M816,192 L832,192" fill="none" stroke="#4db04d" stroke-width="3" stroke-linecap="square" stroke-linejoin="miter"/>
<line x1="832" y1="192" x2="840" y2="192" stroke="#4db04d" stroke-width="3" stroke-linecap="square"/>
<line x1="872" y1="192" x2="880" y2="192" stroke="#4db04d" stroke-width="3" stroke-linecap="square"/>
<linearGradient id="rg11" gradientUnits="userSpaceOnUse" x1="840" y1="192" x2="872" y2="192"><stop offset="0" stop-color="#4db04d"/><stop offset="1" stop-color="#4db04d"/></linearGradient>
<path d="M840.00,192.00 L842.00,198.00 L846.00,186.00 L850.00,198.00 L854.00,186.00 L858.00,198.00 L862.00,186.00 L866.00,198.00 L870.00,186.00 L872.00,192.00" fill="none" stroke="url(#rg11)" stroke-width="3" stroke-linejoin="miter" stroke-miterlimit="10"/>
<path d="M880,192 L912,192" fill="none" stroke="#4db04d" stroke-width="3" stroke-linecap="square" stroke-linejoin="miter"/>
<rect x="912" y="176" width="3" height="32" fill="#4db04d"/>
<line x1="915" y1="186" x2="928" y2="176" stroke="#00ff00" stroke-width="3" stroke-linecap="round"/>
<line x1="915" y1="198" x2="928" y2="208" stroke="#5f9e5f" stroke-width="3" stroke-linecap="round"/>
<polygon points="928,208 919.2,206.3 924.1,199.95" fill="#d8d8d8"/>
<path d="M928,176 L928,144" fill="none" stroke="#00ff00" stroke-width="3" stroke-linecap="square" stroke-linejoin="miter"/>
<line x1="928" y1="96" x2="928" y2="104" stroke="#00ff00" stroke-width="3" stroke-linecap="square"/>
<line x1="928" y1="136" x2="928" y2="144" stroke="#00ff00" stroke-width="3" stroke-linecap="square"/>
<linearGradient id="rg12" gradientUnits="userSpaceOnUse" x1="928" y1="104" x2="928" y2="136"><stop offset="0" stop-color="#00ff00"/><stop offset="1" stop-color="#00ff00"/></linearGradient>
<path d="M928.00,104.00 L922.00,106.00 L934.00,110.00 L922.00,114.00 L934.00,118.00 L922.00,122.00 L934.00,126.00 L922.00,130.00 L934.00,134.00 L928.00,136.00" fill="none" stroke="url(#rg12)" stroke-width="3" stroke-linejoin="miter" stroke-miterlimit="10"/>
<path d="M928,96 L928,64 L891.5,64" fill="none" stroke="#00ff00" stroke-width="3" stroke-linecap="square" stroke-linejoin="miter"/>
<path d="M802.5,64 L868.5,64" fill="none" stroke="#00ff00" stroke-width="3" stroke-linecap="square" stroke-linejoin="miter"/>
<circle cx="880" cy="64" r="11.6" fill="none" stroke="#c0c0c0" stroke-width="3"/>
<path d="M928,208 L928,304" fill="none" stroke="#5f9e5f" stroke-width="3" stroke-linecap="square" stroke-linejoin="miter"/>
<line x1="928" y1="240" x2="928" y2="256" stroke="#5f9e5f" stroke-width="3" stroke-linecap="square"/>
<line x1="928" y1="288" x2="928" y2="304" stroke="#7f7f7f" stroke-width="3" stroke-linecap="square"/>
<linearGradient id="rg13" gradientUnits="userSpaceOnUse" x1="928" y1="256" x2="928" y2="288"><stop offset="0" stop-color="#5f9e5f"/><stop offset="1" stop-color="#7f7f7f"/></linearGradient>
<path d="M928.00,256.00 L922.00,258.00 L934.00,262.00 L922.00,266.00 L934.00,270.00 L922.00,274.00 L934.00,278.00 L922.00,282.00 L934.00,286.00 L928.00,288.00" fill="none" stroke="url(#rg13)" stroke-width="3" stroke-linejoin="miter" stroke-miterlimit="10"/>
<path d="M928,304 L928,336" fill="none" stroke="#7f7f7f" stroke-width="3" stroke-linecap="square" stroke-linejoin="miter"/>
<line x1="918" y1="336" x2="938" y2="336" stroke="#7f7f7f" stroke-width="3" stroke-linecap="round"/>
<line x1="922" y1="341" x2="934" y2="341" stroke="#7f7f7f" stroke-width="3" stroke-linecap="round"/>
<line x1="926" y1="346" x2="930" y2="346" stroke="#7f7f7f" stroke-width="3" stroke-linecap="round"/>
<path d="M928,240 L992,240 L992,260.4" fill="none" stroke="#5f9e5f" stroke-width="3" stroke-linecap="square" stroke-linejoin="miter"/>
<circle cx="992" cy="272" r="11.6" fill="none" stroke="#c0c0c0" stroke-width="3"/>
<path d="M992,283.6 L992,304 L928,304" fill="none" stroke="#7f7f7f" stroke-width="3" stroke-linecap="square" stroke-linejoin="miter"/>
<rect x="-80.80" y="-2.00" width="4" height="4" fill="#ffff00"/>
<rect x="-64.80" y="-2.00" width="4" height="4" fill="#ffff00"/>
<rect x="-48.80" y="-2.00" width="4" height="4" fill="#ffff00"/>
<rect x="-32.80" y="-2.00" width="4" height="4" fill="#ffff00"/>
<rect x="-16.80" y="-2.00" width="4" height="4" fill="#ffff00"/>
<rect x="-2.00" y="-1.10" width="4" height="4" fill="#ffff00"/>
<rect x="-2.00" y="14.90" width="4" height="4" fill="#ffff00"/>
<rect x="-2.00" y="30.90" width="4" height="4" fill="#ffff00"/>
<rect x="-2.00" y="46.90" width="4" height="4" fill="#ffff00"/>
<rect x="-2.00" y="62.90" width="4" height="4" fill="#ffff00"/>
<rect x="-2.00" y="78.90" width="4" height="4" fill="#ffff00"/>
<rect x="-2.00" y="93.90" width="4" height="4" fill="#ffff00"/>
<rect x="-2.00" y="109.70" width="4" height="4" fill="#ffff00"/>
<rect x="-2.00" y="125.70" width="4" height="4" fill="#ffff00"/>
<rect x="-2.00" y="141.70" width="4" height="4" fill="#ffff00"/>
<rect x="-2.00" y="157.70" width="4" height="4" fill="#ffff00"/>
<rect x="-2.00" y="173.70" width="4" height="4" fill="#ffff00"/>
<rect x="-2.00" y="189.70" width="4" height="4" fill="#ffff00"/>
<rect x="-2.00" y="205.70" width="4" height="4" fill="#ffff00"/>
<rect x="-2.00" y="221.70" width="4" height="4" fill="#ffff00"/>
<rect x="162.00" y="14.00" width="4" height="4" fill="#ffff00"/>
<rect x="178.00" y="14.00" width="4" height="4" fill="#ffff00"/>
<rect x="91.10" y="94.00" width="4" height="4" fill="#ffff00"/>
<rect x="107.10" y="94.00" width="4" height="4" fill="#ffff00"/>
<rect x="123.10" y="94.00" width="4" height="4" fill="#ffff00"/>
<rect x="139.10" y="94.00" width="4" height="4" fill="#ffff00"/>
<rect x="155.10" y="94.00" width="4" height="4" fill="#ffff00"/>
<rect x="171.10" y="94.00" width="4" height="4" fill="#ffff00"/>
<rect x="187.10" y="94.00" width="4" height="4" fill="#ffff00"/>
<rect x="78.00" y="142.00" width="4" height="4" fill="#ffff00"/>
<rect x="94.00" y="142.00" width="4" height="4" fill="#ffff00"/>
<rect x="110.00" y="142.00" width="4" height="4" fill="#ffff00"/>
<rect x="126.00" y="142.00" width="4" height="4" fill="#ffff00"/>
<rect x="142.00" y="142.00" width="4" height="4" fill="#ffff00"/>
<rect x="158.00" y="142.00" width="4" height="4" fill="#ffff00"/>
<rect x="174.00" y="142.00" width="4" height="4" fill="#ffff00"/>
<rect x="190.00" y="18.00" width="4" height="4" fill="#ffff00"/>
<rect x="190.00" y="34.00" width="4" height="4" fill="#ffff00"/>
<rect x="190.00" y="50.00" width="4" height="4" fill="#ffff00"/>
<rect x="190.00" y="66.00" width="4" height="4" fill="#ffff00"/>
<rect x="190.00" y="82.00" width="4" height="4" fill="#ffff00"/>
<rect x="190.00" y="94.00" width="4" height="4" fill="#ffff00"/>
<rect x="190.00" y="110.00" width="4" height="4" fill="#ffff00"/>
<rect x="190.00" y="126.00" width="4" height="4" fill="#ffff00"/>
<rect x="78.00" y="97.30" width="4" height="4" fill="#ffff00"/>
<rect x="78.00" y="113.30" width="4" height="4" fill="#ffff00"/>
<rect x="78.00" y="129.30" width="4" height="4" fill="#ffff00"/>
<rect x="78.00" y="145.00" width="4" height="4" fill="#ffff00"/>
<rect x="78.00" y="161.00" width="4" height="4" fill="#ffff00"/>
<rect x="78.00" y="177.00" width="4" height="4" fill="#ffff00"/>
<rect x="78.00" y="193.00" width="4" height="4" fill="#ffff00"/>
<rect x="78.00" y="209.00" width="4" height="4" fill="#ffff00"/>
<rect x="229.80" y="94.00" width="4" height="4" fill="#ffff00"/>
<rect x="245.80" y="94.00" width="4" height="4" fill="#ffff00"/>
<rect x="261.80" y="94.00" width="4" height="4" fill="#ffff00"/>
<rect x="277.80" y="94.00" width="4" height="4" fill="#ffff00"/>
<rect x="293.80" y="94.00" width="4" height="4" fill="#ffff00"/>
<rect x="309.80" y="94.00" width="4" height="4" fill="#ffff00"/>
<rect x="325.80" y="94.00" width="4" height="4" fill="#ffff00"/>
<rect x="334.00" y="39.00" width="4" height="4" fill="#ffff00"/>
<rect x="334.00" y="55.00" width="4" height="4" fill="#ffff00"/>
<rect x="334.00" y="71.00" width="4" height="4" fill="#ffff00"/>
<rect x="334.00" y="87.00" width="4" height="4" fill="#ffff00"/>
<rect x="222.00" y="102.30" width="4" height="4" fill="#ffff00"/>
<rect x="222.00" y="118.30" width="4" height="4" fill="#ffff00"/>
<rect x="222.00" y="134.30" width="4" height="4" fill="#ffff00"/>
<rect x="222.00" y="150.30" width="4" height="4" fill="#ffff00"/>
<rect x="222.00" y="166.30" width="4" height="4" fill="#ffff00"/>
<rect x="222.00" y="182.30" width="4" height="4" fill="#ffff00"/>
<rect x="222.00" y="198.30" width="4" height="4" fill="#ffff00"/>
<rect x="222.00" y="214.30" width="4" height="4" fill="#ffff00"/>
<rect x="309.70" y="30.00" width="4" height="4" fill="#ffff00"/>
<rect x="325.70" y="30.00" width="4" height="4" fill="#ffff00"/>
<rect x="349.80" y="30.00" width="4" height="4" fill="#ffff00"/>
<rect x="365.80" y="30.00" width="4" height="4" fill="#ffff00"/>
<rect x="381.80" y="30.00" width="4" height="4" fill="#ffff00"/>
<rect x="397.80" y="30.00" width="4" height="4" fill="#ffff00"/>
<rect x="414.00" y="46.00" width="4" height="4" fill="#ffff00"/>
<rect x="414.00" y="62.00" width="4" height="4" fill="#ffff00"/>
<rect x="414.00" y="78.00" width="4" height="4" fill="#ffff00"/>
<rect x="414.00" y="90.30" width="4" height="4" fill="#ffff00"/>
<rect x="414.00" y="106.30" width="4" height="4" fill="#ffff00"/>
<rect x="414.00" y="122.30" width="4" height="4" fill="#ffff00"/>
<rect x="414.00" y="138.30" width="4" height="4" fill="#ffff00"/>
<rect x="321.90" y="142.00" width="4" height="4" fill="#ffff00"/>
<rect x="337.90" y="142.00" width="4" height="4" fill="#ffff00"/>
<rect x="353.90" y="142.00" width="4" height="4" fill="#ffff00"/>
<rect x="369.90" y="142.00" width="4" height="4" fill="#ffff00"/>
<rect x="385.90" y="142.00" width="4" height="4" fill="#ffff00"/>
<rect x="401.90" y="142.00" width="4" height="4" fill="#ffff00"/>
<rect x="416.50" y="78.00" width="4" height="4" fill="#ffff00"/>
<rect x="432.50" y="78.00" width="4" height="4" fill="#ffff00"/>
<rect x="448.50" y="78.00" width="4" height="4" fill="#ffff00"/>
<rect x="464.50" y="78.00" width="4" height="4" fill="#ffff00"/>
<rect x="480.50" y="78.00" width="4" height="4" fill="#ffff00"/>
<rect x="496.50" y="78.00" width="4" height="4" fill="#ffff00"/>
<rect x="512.50" y="78.00" width="4" height="4" fill="#ffff00"/>
<rect x="526.00" y="80.00" width="4" height="4" fill="#ffff00"/>
<rect x="526.00" y="96.00" width="4" height="4" fill="#ffff00"/>
<rect x="526.00" y="112.00" width="4" height="4" fill="#ffff00"/>
<rect x="526.00" y="128.00" width="4" height="4" fill="#ffff00"/>
<rect x="526.00" y="144.00" width="4" height="4" fill="#ffff00"/>
<rect x="504.00" y="158.00" width="4" height="4" fill="#ffff00"/>
<rect x="520.00" y="158.00" width="4" height="4" fill="#ffff00"/>
<rect x="539.00" y="158.00" width="4" height="4" fill="#ffff00"/>
<rect x="555.00" y="158.00" width="4" height="4" fill="#ffff00"/>
<rect x="571.00" y="158.00" width="4" height="4" fill="#ffff00"/>
<rect x="587.00" y="158.00" width="4" height="4" fill="#ffff00"/>
<rect x="603.00" y="158.00" width="4" height="4" fill="#ffff00"/>
<rect x="606.00" y="112.00" width="4" height="4" fill="#ffff00"/>
<rect x="606.00" y="128.00" width="4" height="4" fill="#ffff00"/>
<rect x="606.00" y="144.00" width="4" height="4" fill="#ffff00"/>
<rect x="619.00" y="110.00" width="4" height="4" fill="#ffff00"/>
<rect x="635.00" y="110.00" width="4" height="4" fill="#ffff00"/>
<rect x="651.00" y="110.00" width="4" height="4" fill="#ffff00"/>
<rect x="667.00" y="110.00" width="4" height="4" fill="#ffff00"/>
<rect x="683.00" y="110.00" width="4" height="4" fill="#ffff00"/>
<rect x="699.00" y="110.00" width="4" height="4" fill="#ffff00"/>
<rect x="715.00" y="110.00" width="4" height="4" fill="#ffff00"/>
<rect x="718.00" y="123.00" width="4" height="4" fill="#ffff00"/>
<rect x="718.00" y="139.00" width="4" height="4" fill="#ffff00"/>
<rect x="718.00" y="155.00" width="4" height="4" fill="#ffff00"/>
<rect x="718.00" y="171.00" width="4" height="4" fill="#ffff00"/>
<rect x="688.00" y="174.00" width="4" height="4" fill="#ffff00"/>
<rect x="704.00" y="174.00" width="4" height="4" fill="#ffff00"/>
<rect x="733.00" y="238.00" width="4" height="4" fill="#ffff00"/>
<rect x="749.00" y="238.00" width="4" height="4" fill="#ffff00"/>
<rect x="765.00" y="238.00" width="4" height="4" fill="#ffff00"/>
<rect x="781.00" y="238.00" width="4" height="4" fill="#ffff00"/>
<rect x="797.00" y="238.00" width="4" height="4" fill="#ffff00"/>
<rect x="813.00" y="238.00" width="4" height="4" fill="#ffff00"/>
<rect x="829.00" y="238.00" width="4" height="4" fill="#ffff00"/>
<rect x="845.00" y="238.00" width="4" height="4" fill="#ffff00"/>
<rect x="861.00" y="238.00" width="4" height="4" fill="#ffff00"/>
<rect x="877.00" y="238.00" width="4" height="4" fill="#ffff00"/>
<rect x="893.00" y="238.00" width="4" height="4" fill="#ffff00"/>
<rect x="909.00" y="238.00" width="4" height="4" fill="#ffff00"/>
<rect x="925.00" y="238.00" width="4" height="4" fill="#ffff00"/>
<rect x="810.90" y="190.00" width="4" height="4" fill="#ffff00"/>
<rect x="826.90" y="190.00" width="4" height="4" fill="#ffff00"/>
<rect x="842.90" y="190.00" width="4" height="4" fill="#ffff00"/>
<rect x="858.90" y="190.00" width="4" height="4" fill="#ffff00"/>
<rect x="874.90" y="190.00" width="4" height="4" fill="#ffff00"/>
<rect x="890.90" y="190.00" width="4" height="4" fill="#ffff00"/>
<rect x="906.90" y="190.00" width="4" height="4" fill="#ffff00"/>
<rect x="917.00" y="180.00" width="4" height="4" fill="#ffff00"/>
<rect x="921.00" y="201.50" width="4" height="4" fill="#ffff00"/>
<rect x="926.00" y="72.10" width="4" height="4" fill="#ffff00"/>
<rect x="926.00" y="88.10" width="4" height="4" fill="#ffff00"/>
<rect x="926.00" y="103.00" width="4" height="4" fill="#ffff00"/>
<rect x="926.00" y="119.00" width="4" height="4" fill="#ffff00"/>
<rect x="926.00" y="135.00" width="4" height="4" fill="#ffff00"/>
<rect x="926.00" y="151.00" width="4" height="4" fill="#ffff00"/>
<rect x="926.00" y="167.00" width="4" height="4" fill="#ffff00"/>
<rect x="807.00" y="62.00" width="4" height="4" fill="#ffff00"/>
<rect x="823.00" y="62.00" width="4" height="4" fill="#ffff00"/>
<rect x="839.00" y="62.00" width="4" height="4" fill="#ffff00"/>
<rect x="855.00" y="62.00" width="4" height="4" fill="#ffff00"/>
<rect x="871.00" y="62.00" width="4" height="4" fill="#ffff00"/>
<rect x="887.00" y="62.00" width="4" height="4" fill="#ffff00"/>
<rect x="903.00" y="62.00" width="4" height="4" fill="#ffff00"/>
<rect x="919.00" y="62.00" width="4" height="4" fill="#ffff00"/>
<rect x="926.00" y="216.00" width="4" height="4" fill="#ffff00"/>
<rect x="926.00" y="232.00" width="4" height="4" fill="#ffff00"/>
<rect x="926.00" y="248.50" width="4" height="4" fill="#ffff00"/>
<rect x="926.00" y="264.50" width="4" height="4" fill="#ffff00"/>
<rect x="926.00" y="280.50" width="4" height="4" fill="#ffff00"/>
<rect x="926.00" y="296.50" width="4" height="4" fill="#ffff00"/>
<rect x="926.00" y="312.20" width="4" height="4" fill="#ffff00"/>
<rect x="926.00" y="328.20" width="4" height="4" fill="#ffff00"/>
<rect x="926.70" y="238.00" width="4" height="4" fill="#ffff00"/>
<rect x="942.70" y="238.00" width="4" height="4" fill="#ffff00"/>
<rect x="958.70" y="238.00" width="4" height="4" fill="#ffff00"/>
<rect x="974.70" y="238.00" width="4" height="4" fill="#ffff00"/>
<rect x="941.00" y="302.00" width="4" height="4" fill="#ffff00"/>
<rect x="957.00" y="302.00" width="4" height="4" fill="#ffff00"/>
<rect x="973.00" y="302.00" width="4" height="4" fill="#ffff00"/>
<rect x="989.00" y="302.00" width="4" height="4" fill="#ffff00"/>
<circle cx="0" cy="0" r="3.2" fill="#ffffff"/>
<circle cx="192" cy="16" r="3.2" fill="#ffffff"/>
<circle cx="80" cy="96" r="3.2" fill="#ffffff"/>
<circle cx="192" cy="96" r="3.2" fill="#ffffff"/>
<circle cx="80" cy="144" r="3.2" fill="#ffffff"/>
<circle cx="224" cy="96" r="3.2" fill="#ffffff"/>
<circle cx="336" cy="32" r="3.2" fill="#ffffff"/>
<circle cx="416" cy="80" r="3.2" fill="#ffffff"/>
<circle cx="416" cy="144" r="3.2" fill="#ffffff"/>
<circle cx="528" cy="160" r="3.2" fill="#ffffff"/>
<circle cx="608" cy="160" r="3.2" fill="#ffffff"/>
<circle cx="720" cy="176" r="3.2" fill="#ffffff"/>
<circle cx="928" cy="240" r="3.2" fill="#ffffff"/>
<circle cx="928" cy="304" r="3.2" fill="#ffffff"/>
<text x="-111.5" y="-19.1" text-anchor="middle" font-size="12" fill="#fff" stroke="#fff" stroke-width="0.25">10Hz</text>
<text x="-38.9" y="-10.1" text-anchor="middle" font-size="12" fill="#fff" stroke="#fff" stroke-width="0.25">10k</text>
<text x="15" y="110.5" text-anchor="start" font-size="12" fill="#fff" stroke="#fff" stroke-width="0.25">100nF</text>
<line x1="116.7" y1="-0.2" x2="123.3" y2="-0.2" stroke="#d0d0d0" stroke-width="1.25"/><line x1="120" y1="-3.2" x2="120" y2="2.8" stroke="#d0d0d0" stroke-width="1.25"/>
<line x1="118.05" y1="31.55" x2="121.95" y2="31.55" stroke="#d0d0d0" stroke-width="1.4"/>
<text x="136.9" y="86" text-anchor="middle" font-size="12" fill="#fff" stroke="#fff" stroke-width="0.25">49.9k</text>
<text x="137" y="131" text-anchor="middle" font-size="12" fill="#fff" stroke="#fff" stroke-width="0.25">10pF</text>
<text x="90" y="182.5" text-anchor="start" font-size="12" fill="#fff" stroke="#fff" stroke-width="0.25">1k</text>
<line x1="260.7" y1="15.8" x2="267.3" y2="15.8" stroke="#d0d0d0" stroke-width="1.25"/><line x1="264" y1="12.8" x2="264" y2="18.8" stroke="#d0d0d0" stroke-width="1.25"/>
<line x1="262.05" y1="47.55" x2="265.95" y2="47.55" stroke="#d0d0d0" stroke-width="1.4"/>
<text x="272.9" y="86" text-anchor="middle" font-size="12" fill="#fff" stroke="#fff" stroke-width="0.25">8.9k</text>
<text x="235" y="190.5" text-anchor="start" font-size="12" fill="#fff" stroke="#fff" stroke-width="0.25">1k</text>
<text x="376.9" y="22" text-anchor="middle" font-size="12" fill="#fff" stroke="#fff" stroke-width="0.25">24.9k</text>
<text x="317.3" y="147.6" text-anchor="end" font-size="12" fill="#fff" stroke="#fff" stroke-width="0.25">+0.92 V</text>
<text x="376.9" y="134" text-anchor="middle" font-size="12" fill="#fff" stroke="#fff" stroke-width="0.25">10k</text>
<line x1="454.05" y1="143.55" x2="457.95" y2="143.55" stroke="#d0d0d0" stroke-width="1.4"/>
<line x1="452.7" y1="175.8" x2="459.3" y2="175.8" stroke="#d0d0d0" stroke-width="1.25"/><line x1="456" y1="172.8" x2="456" y2="178.8" stroke="#d0d0d0" stroke-width="1.25"/>
<text x="472.9" y="70" text-anchor="middle" font-size="12" fill="#fff" stroke="#fff" stroke-width="0.25">10k</text>
<text x="568.9" y="150" text-anchor="middle" font-size="12" fill="#fff" stroke="#fff" stroke-width="0.25">10k</text>
<line x1="646.05" y1="159.55" x2="649.95" y2="159.55" stroke="#d0d0d0" stroke-width="1.4"/>
<line x1="644.7" y1="191.8" x2="651.3" y2="191.8" stroke="#d0d0d0" stroke-width="1.25"/><line x1="648" y1="188.8" x2="648" y2="194.8" stroke="#d0d0d0" stroke-width="1.25"/>
<text x="664.9" y="102" text-anchor="middle" font-size="12" fill="#fff" stroke="#fff" stroke-width="0.25">10k</text>
<line x1="756.7" y1="175.8" x2="763.3" y2="175.8" stroke="#d0d0d0" stroke-width="1.25"/><line x1="760" y1="172.8" x2="760" y2="178.8" stroke="#d0d0d0" stroke-width="1.25"/>
<line x1="758.05" y1="207.55" x2="761.95" y2="207.55" stroke="#d0d0d0" stroke-width="1.4"/>
<text x="856.9" y="182" text-anchor="middle" font-size="12" fill="#fff" stroke="#fff" stroke-width="0.25">1k</text>
<text x="938" y="126.5" text-anchor="start" font-size="12" fill="#fff" stroke="#fff" stroke-width="0.25">250</text>
<text x="880" y="67.5" text-anchor="middle" font-size="12.3" fill="#c0c0c0">A</text>
<text x="864.3" y="74.5" text-anchor="middle" font-size="12" fill="#fff" stroke="#fff" stroke-width="0.25">+</text>
<text x="881.1" y="49.8" text-anchor="middle" font-size="12" fill="#fff" stroke="#fff" stroke-width="0.25">4.918 mA</text>
<text x="797.7" y="67.6" text-anchor="end" font-size="12" fill="#fff" stroke="#fff" stroke-width="0.25">+24V</text>
<text x="938" y="278.5" text-anchor="start" font-size="12" fill="#fff" stroke="#fff" stroke-width="0.25">250</text>
<text x="992" y="276.1" text-anchor="middle" font-size="12.3" fill="#c0c0c0">V</text>
<text x="982.3" y="259.9" text-anchor="middle" font-size="12" fill="#fff" stroke="#fff" stroke-width="0.25">+</text>
<text x="1010.2" y="278.5" text-anchor="start" font-size="12" fill="#fff" stroke="#fff" stroke-width="0.25">1.242 V</text>
</g>
</svg>
</body></html>
